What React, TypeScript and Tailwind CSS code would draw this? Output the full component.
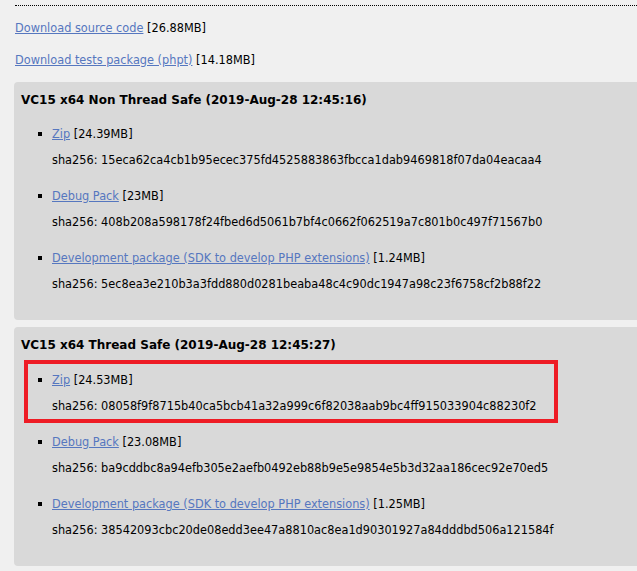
const body = '"DejaVu Sans Condensed", "DejaVu Sans", sans-serif';

type Item = { label: string; size: string; sha: string };

const nts: Item[] = [
  { label: "Zip", size: "24.39MB", sha: "15eca62ca4cb1b95ecec375fd4525883863fbcca1dab9469818f07da04eacaa4" },
  { label: "Debug Pack", size: "23MB", sha: "408b208a598178f24fbed6d5061b7bf4c0662f062519a7c801b0c497f71567b0" },
  { label: "Development package (SDK to develop PHP extensions)", size: "1.24MB", sha: "5ec8ea3e210b3a3fdd880d0281beaba48c4c90dc1947a98c23f6758cf2b88f22" },
];

const ts: Item[] = [
  { label: "Zip", size: "24.53MB", sha: "08058f9f8715b40ca5bcb41a32a999c6f82038aab9bc4ff915033904c88230f2" },
  { label: "Debug Pack", size: "23.08MB", sha: "ba9cddbc8a94efb305e2aefb0492eb88b9e5e9854e5b3d32aa186cec92e70ed5" },
  { label: "Development package (SDK to develop PHP extensions)", size: "1.25MB", sha: "38542093cbc20de08edd3ee47a8810ac8ea1d90301927a84dddbd506a121584f" },
];

function Entry({ item }: { item: Item }) {
  return (
    <div>
      <div className="relative h-[18px] leading-[18px] pl-[38px] whitespace-nowrap">
        <span className="absolute left-[24px] top-[7px] w-[4px] h-[4px] bg-black" />
        <a href="#" className="text-[#5677bf] underline">{item.label}</a>{" "}
        <span>[{item.size}]</span>
      </div>
      <div className="mt-[8px] h-[18px] leading-[18px] pl-[38px] whitespace-nowrap">sha256: {item.sha}</div>
    </div>
  );
}

function Card({ title, items, highlight }: { title: string; items: Item[]; highlight?: boolean }) {
  return (
    <div className="ml-[14px] w-[650px] bg-[#d9d9d9] rounded-[4px] pt-[9px] pb-[27px]">
      <div className="pl-[7px] h-[18px] leading-[18px] font-bold text-[12px]" style={{ fontFamily: '"DejaVu Sans", sans-serif' }}>
        {title}
      </div>
      {items.map((it, i) =>
        i === 0 && highlight ? (
          <div key={i} className="mt-[6px] ml-[10px] w-[534px] border-4 border-[#ee1c25] pt-[7px] pb-[4px] -mb-[8px]">
            <div className="-ml-[14px]">
              <Entry item={it} />
            </div>
          </div>
        ) : (
          <div key={i} className={i === 0 ? "mt-[16px]" : "mt-[18px]"}>
            <Entry item={it} />
          </div>
        )
      )}
    </div>
  );
}

export default function App() {
  return (
    <div className="w-[637px] h-[571px] overflow-hidden bg-[#f0f0f0] text-[12.6px] text-black" style={{ fontFamily: body }}>
      <div className="pt-[5px] ml-[15px]">
        <div className="border-t border-dotted border-black" />
      </div>
      <div className="ml-[15px] mt-[13px] h-[18px] leading-[18px]">
        <a href="#" className="text-[#5677bf] underline">Download source code</a> [26.88MB]
      </div>
      <div className="ml-[15px] mt-[14px] h-[18px] leading-[18px]">
        <a href="#" className="text-[#5677bf] underline">Download tests package (phpt)</a> [14.18MB]
      </div>
      <div className="mt-[13px]">
        <Card title="VC15 x64 Non Thread Safe (2019-Aug-28 12:45:16)" items={nts} />
      </div>
      <div className="mt-[7px]">
        <Card title="VC15 x64 Thread Safe (2019-Aug-28 12:45:27)" items={ts} highlight />
      </div>
    </div>
  );
}
